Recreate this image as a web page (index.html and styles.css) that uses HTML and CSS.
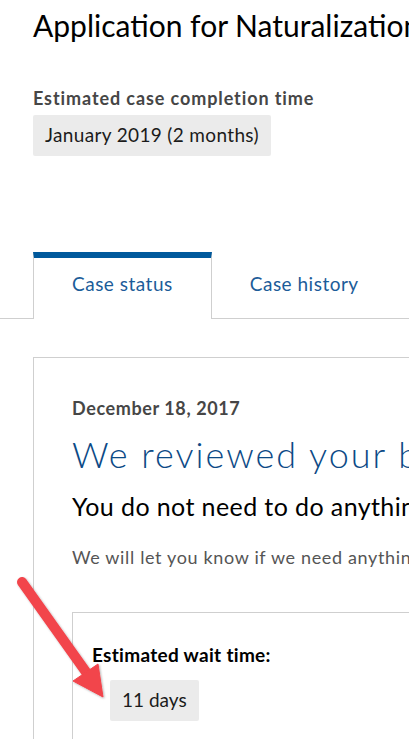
FILE: index.html
```html
<!DOCTYPE html>
<html lang="en">
<head>
  <meta charset="UTF-8">
  <meta name="viewport" content="width=device-width, initial-scale=1.0">
  <title>Case Status</title>
  <link rel="stylesheet" href="styles.css">
</head>
<body>
  <div class="page">
    <header class="case-header">
      <h1>Application for Naturalization</h1>
      <div class="label">Estimated case completion time</div>
      <div class="pill">January 2019 (2 months)</div>
    </header>

    <nav class="tabs">
      <div class="tab active">Case status</div>
      <div class="tab">Case history</div>
    </nav>

    <section class="card">
      <div class="date">December 18, 2017</div>
      <h2>We reviewed your biometrics</h2>
      <h3>You do not need to do anything right now</h3>
      <p class="note">We will let you know if we need anything else from you.</p>

      <div class="wait-box">
        <div class="wait-label">Estimated wait time:</div>
        <div class="pill pill-small">11 days</div>
      </div>
    </section>
  </div>

  <!-- annotation arrow -->
  <svg class="arrow" width="130" height="150" viewBox="0 0 130 150">
    <defs>
      <filter id="shadow" x="-20%" y="-20%" width="140%" height="140%">
        <feDropShadow dx="1" dy="1" stdDeviation="1.2" flood-color="#000" flood-opacity="0.3"/>
      </filter>
    </defs>
    <g filter="url(#shadow)" fill="#f2444b" stroke="#f2444b">
      <line x1="22" y1="12" x2="86" y2="102" stroke-width="10" stroke-linecap="round"/>
      <polygon points="103,127 73,111 98,94" stroke-width="1" stroke-linejoin="round"/>
    </g>
  </svg>
</body>
</html>
```

FILE: styles.css
```css
body {
  margin: 0;
  background: #fff;
  color: #000;
  font-family: Lato, "Open Sans", sans-serif;
  overflow: hidden;
  position: relative;
}
.page {
  width: 900px;
}
.case-header {
  padding: 7px 0 0 33px;
}
h1 {
  margin: 0;
  font-size: 30px;
  font-weight: 400;
  line-height: 1.2;
  white-space: nowrap;
}
.label {
  margin-top: 45px;
  font-size: 18px;
  font-weight: 700;
  line-height: 1.2;
  letter-spacing: 0.9px;
  color: #464646;
}
.pill {
  display: inline-block;
  margin-top: 5px;
  padding: 9px 12px 10px;
  background: #ebebeb;
  border-radius: 2px;
  font-size: 19px;
  line-height: 1.2;
  letter-spacing: 0.35px;
  color: #1b1b1b;
}
.tabs {
  display: flex;
  margin-top: 96px;
  padding-left: 33px;
  border-bottom: 1px solid #cfcfcf;
}
.tab {
  padding: 14px 38px 22px;
  border-top: 6px solid transparent;
  font-size: 19px;
  line-height: 24px;
  letter-spacing: 0.5px;
  color: #1c5c99;
}
.tab.active {
  border-top-color: #00599c;
  border-left: 1px solid #cfcfcf;
  border-right: 1px solid #cfcfcf;
  background: #fff;
  margin-bottom: -1px;
  padding-bottom: 23px;
}
.card {
  margin: 38px 0 0 33px;
  padding: 40px 38px 60px;
  border: 1px solid #cfcfcf;
  white-space: nowrap;
}
.date {
  font-size: 18px;
  font-weight: 700;
  line-height: 1.2;
  letter-spacing: 0.6px;
  color: #464646;
}
h2 {
  margin: 13px 0 0;
  font-size: 36px;
  font-weight: 300;
  line-height: 1.2;
  letter-spacing: 2px;
  color: #0c4a86;
}
h3 {
  margin: 15px 0 0;
  font-size: 25px;
  font-weight: 400;
  line-height: 30px;
  letter-spacing: 0.4px;
}
.note {
  margin: 26px 0 0;
  font-size: 18px;
  line-height: 1.2;
  letter-spacing: 0.65px;
  color: #555;
}
.wait-box {
  margin-top: 43px;
  padding: 31px 20px 40px 19px;
  border: 1px solid #cfcfcf;
}
.wait-label {
  font-size: 19px;
  font-weight: 700;
  line-height: 1.2;
  letter-spacing: 0.3px;
}
.pill-small {
  margin: 13px 0 0 18px;
  font-size: 19px;
  letter-spacing: 0;
}
.arrow {
  position: absolute;
  left: 0;
  top: 570px;
}
```
